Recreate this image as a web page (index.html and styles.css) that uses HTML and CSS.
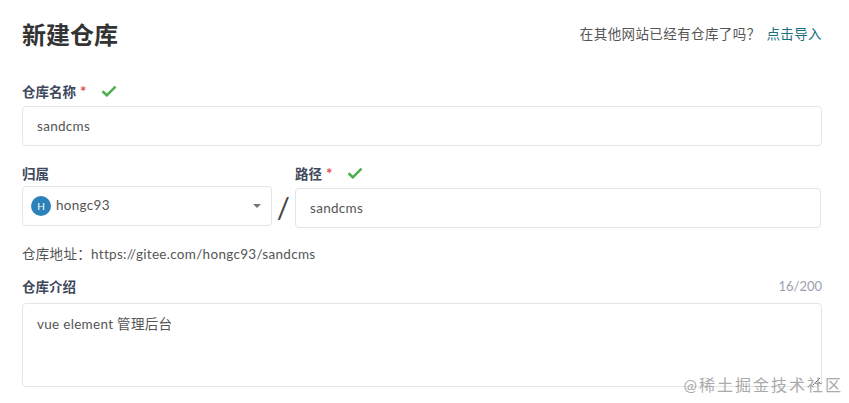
FILE: index.html
```html
<!DOCTYPE html>
<html lang="zh-CN">
<head>
    <meta charset="UTF-8">
    <title>新建仓库</title>
    <link rel="stylesheet" href="styles.css">
</head>
<body>
    <div class="page">
        <!-- Header -->
        <div class="header">
            <h1>新建仓库</h1>
            <p class="import-tip">在其他网站已经有仓库了吗？ <a href="#">点击导入</a></p>
        </div>

        <!-- Name -->
        <div class="field name-field">
            <label class="label">仓库名称 <span class="required">*</span>
                <svg class="check" viewBox="0 0 16 12"><path d="M1.5 6.2 5.8 10.3 14.5 1.7"/></svg>
            </label>
            <input class="input" type="text" value="sandcms">
        </div>

        <!-- Owner / path -->
        <div class="owner-row">
            <div class="owner">
                <label class="label">归属</label>
                <div class="select">
                    <span class="avatar">H</span>
                    <span class="select-text">hongc93</span>
                    <span class="caret"></span>
                </div>
            </div>
            <div class="slash">/</div>
            <div class="path">
                <label class="label">路径 <span class="required">*</span>
                    <svg class="check" viewBox="0 0 16 12"><path d="M1.5 6.2 5.8 10.3 14.5 1.7"/></svg>
                </label>
                <input class="input" type="text" value="sandcms">
            </div>
        </div>

        <p class="address">仓库地址：https://gitee.com/hongc93/sandcms</p>

        <!-- Description -->
        <div class="field">
            <div class="desc-head">
                <label class="label">仓库介绍</label>
                <span class="counter">16/200</span>
            </div>
            <textarea class="textarea">vue element 管理后台</textarea>
        </div>
    </div>

    <div class="watermark">@稀土掘金技术社区</div>
</body>
</html>
```

FILE: styles.css
```css
/* Basic Reset */
* {
    margin: 0;
    padding: 0;
    box-sizing: border-box;
}

body {
    font-family: Lato, "Noto Sans CJK SC", sans-serif;
    font-size: 13.5px;
    letter-spacing: 0.3px;
    color: #40485b;
    background: #fff;
    height: 403px;
    overflow: hidden;
    position: relative;
}

.page {
    padding: 16px 27px 0 22px;
}

/* Header */
.header {
    display: flex;
    justify-content: space-between;
    align-items: center;
    height: 34px;
}

h1 {
    font-size: 24px;
    font-weight: 700;
    letter-spacing: 0;
    color: #333;
}

.import-tip {
    font-size: 13.5px;
    letter-spacing: 0.4px;
    color: #555;
}

.import-tip a {
    margin-left: 2px;
    color: #1b6f80;
    text-decoration: none;
}

/* Fields */
.name-field {
    margin-top: 32px;
}

.label {
    display: flex;
    align-items: center;
    gap: 4px;
    height: 18px;
    font-size: 13.5px;
    font-weight: 700;
    letter-spacing: 0;
    color: #40485b;
}

.required {
    font-size: 15px;
    color: #e5484d;
}

.check {
    width: 16px;
    height: 12px;
    margin-left: 11px;
    fill: none;
    stroke: #4caf50;
    stroke-width: 2.6;
}

.input,
.select,
.textarea {
    display: block;
    width: 100%;
    border: 1px solid #e3e5e8;
    border-radius: 4px;
    background: #fff;
    font-family: inherit;
    font-size: 13.5px;
    letter-spacing: 0.3px;
    color: #555;
    outline: none;
}

.name-field .input {
    height: 40px;
    margin-top: 6px;
    padding: 0 14px;
}

/* Owner and path */
.owner-row {
    display: flex;
    margin-top: 18px;
    margin-right: 1px;
}

.owner {
    width: 250px;
}

.owner .label {
    margin-bottom: 4px;
}

.select {
    display: flex;
    align-items: center;
    height: 40px;
    padding: 0 10px 0 8px;
}

.avatar {
    width: 20px;
    height: 20px;
    border-radius: 50%;
    background: #2b82b9;
    color: #fff;
    font-size: 10px;
    line-height: 20px;
    letter-spacing: 0;
    text-align: center;
    flex-shrink: 0;
}

.select-text {
    flex: 1;
    margin-left: 5px;
    margin-bottom: 2px;
}

.caret {
    width: 0;
    height: 0;
    border-left: 4px solid transparent;
    border-right: 4px solid transparent;
    border-top: 4px solid #777;
}

.slash {
    width: 23px;
    height: 40px;
    margin-top: 23px;
    font-size: 29px;
    line-height: 40px;
    text-align: center;
    color: #444;
}

.path {
    flex: 1;
}

.path .label {
    margin-bottom: 6px;
}

.path .input {
    height: 40px;
    padding: 0 14px;
}

.address {
    margin-top: 17px;
    height: 18px;
    line-height: 18px;
    color: #555;
}

/* Description */
.desc-head {
    display: flex;
    justify-content: space-between;
    align-items: center;
    margin-top: 14px;
    margin-bottom: 8px;
}

.counter {
    font-size: 13px;
    letter-spacing: 0;
    color: #9a9fae;
}

.textarea {
    height: 84px;
    padding: 9px 14px;
    resize: vertical;
}

/* Watermark */
.watermark {
    position: absolute;
    right: 6px;
    bottom: 7px;
    font-size: 16px;
    letter-spacing: 2px;
    color: #aaa;
}
```
